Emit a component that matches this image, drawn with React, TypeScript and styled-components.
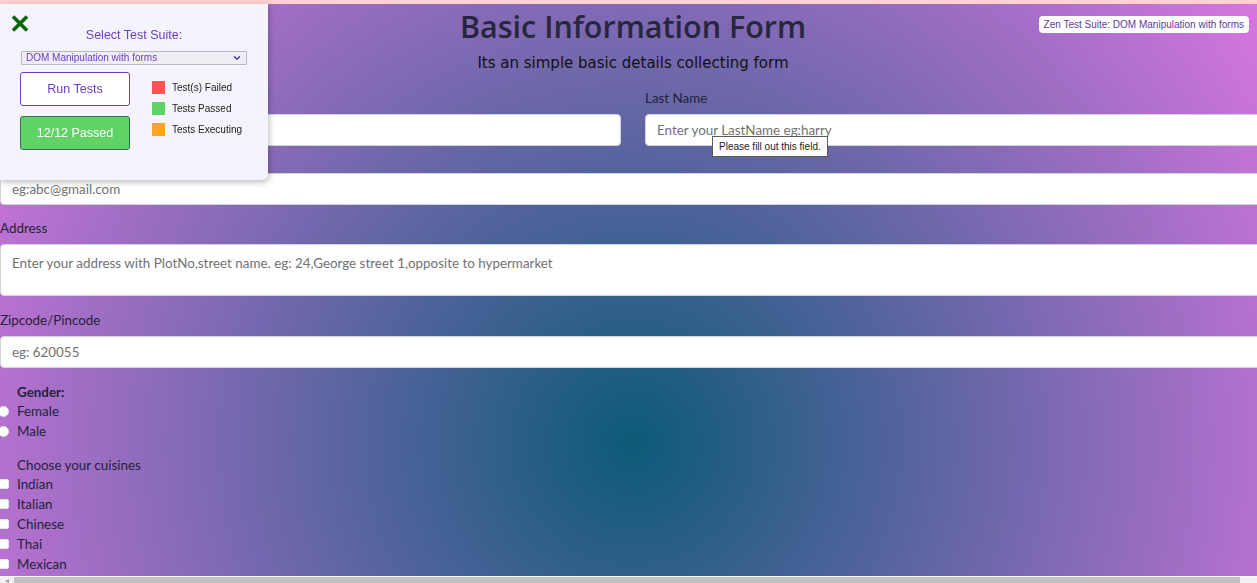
import React from 'react';
import styled, { createGlobalStyle } from 'styled-components';
import { ChevronDown } from 'lucide-react';

const GlobalStyle = createGlobalStyle`
	html, body {
		margin: 0;
		padding: 0;
		overflow: hidden;
	}

	body {
		font-family: Lato, "Liberation Sans", sans-serif;
	}

	* {
		box-sizing: border-box;
	}
`;

const Page = styled.div`
	position: relative;
	width: 1266px;
	height: 886px;
	background: radial-gradient(circle at 50% 50%, #0c5a78 0%, #da76e2 100%);
	color: #222;
`;

const TopStrip = styled.div`
	height: 4px;
	background: #ffd2d2;
`;

const Header = styled.header`
	width: 1266px;
	padding-top: 2px;
	text-align: center;
`;

const Title = styled.h1`
	margin: 0;
	font-family: "Open Sans", "Noto Sans", sans-serif;
	font-size: 30.5px;
	line-height: 40px;
	font-weight: 600;
	color: #28263e;
`;

const Subtitle = styled.p`
	margin: 6px 0 0;
	font-family: "Comic Sans MS", "DejaVu Sans", sans-serif;
	font-size: 15px;
	line-height: 22px;
	color: #111;
`;

const Form = styled.form`
	width: 1266px;
	margin-top: 14px;
`;

const Row = styled.div<{ $gap?: number }>`
	display: grid;
	grid-template-columns: 1fr 1fr;
	column-gap: 24px;
	margin-bottom: ${(p) => p.$gap ?? 13}px;
`;

const Field = styled.div<{ $gap?: number }>`
	position: relative;
	display: flex;
	flex-direction: column;
	margin-bottom: ${(p) => p.$gap ?? 0}px;
`;

const Label = styled.label`
	display: block;
	font-size: 13.4px;
	line-height: 20px;
	margin-bottom: 6px;
	color: #24223a;
`;

const Input = styled.input`
	width: 100%;
	height: 32px;
	padding: 0 11px;
	border: 1px solid #cfd3dc;
	border-radius: 4px;
	background: #fff;
	font-family: Lato, "Liberation Sans", sans-serif;
	font-size: 13.4px;
	outline: none;

	&::placeholder {
		color: #727272;
	}
`;

const TextArea = styled.textarea`
	width: 100%;
	height: 52px;
	padding: 8px 11px;
	border: 1px solid #cfd3dc;
	border-radius: 4px;
	background: #fff;
	font-family: Lato, "Liberation Sans", sans-serif;
	font-size: 13.4px;
	line-height: 20px;
	resize: none;
	outline: none;

	&::placeholder {
		color: #727272;
	}
`;

const Tooltip = styled.div`
	position: absolute;
	top: 48px;
	left: 67px;
	padding: 4px 6px;
	background: #fff;
	border: 1px solid #5a5a5a;
	font-family: "Liberation Sans", Arial, sans-serif;
	font-size: 10px;
	line-height: 11px;
	color: #222;
	white-space: nowrap;
`;

const Group = styled.fieldset<{ $top: number }>`
	margin: ${(p) => p.$top}px 0 0;
	padding: 0;
	border: none;
`;

const GroupTitle = styled.div<{ $bold?: boolean }>`
	padding-left: 17px;
	font-size: 13.4px;
	line-height: 18px;
	font-weight: ${(p) => (p.$bold ? 700 : 400)};
	color: #24223a;
`;

const Option = styled.label`
	display: flex;
	align-items: center;
	height: 20px;
	font-size: 13.4px;
	color: #24223a;
`;

const Radio = styled.input.attrs({ type: 'radio' })`
	appearance: none;
	width: 11px;
	height: 11px;
	margin: 0 8px 0 -2px;
	border: 1px solid #e4e4e4;
	border-radius: 50%;
	background: #fff;
`;

const Check = styled.input.attrs({ type: 'checkbox' })`
	appearance: none;
	width: 11px;
	height: 10px;
	margin: 0 8px 0 -2px;
	border: 1px solid #e4e4e4;
	border-radius: 2px;
	background: #fff;
`;

const Panel = styled.aside`
	position: fixed;
	top: 4px;
	left: 0;
	width: 268px;
	height: 176px;
	padding: 23px 20px 0;
	background: #f5f3fb;
	border-radius: 0 0 6px 0;
	box-shadow: 1px 2px 6px rgba(0, 0, 0, 0.28);
	font-family: "Liberation Sans", Arial, sans-serif;
	z-index: 10;
`;

const CloseButton = styled.button`
	position: absolute;
	top: 10px;
	left: 10px;
	width: 20px;
	height: 18px;
	padding: 0;
	border: none;
	background: none;
	display: flex;
	align-items: center;
	justify-content: center;
`;

const PanelTitle = styled.div`
	text-align: center;
	font-size: 12.5px;
	line-height: 16px;
	color: #6a3fc6;
`;

const SelectWrap = styled.div`
	position: relative;
	margin: 8px 0 0 1px;
	width: 226px;
`;

const Select = styled.select`
	appearance: none;
	display: block;
	width: 100%;
	height: 14px;
	padding: 0 0 0 4px;
	border: 1px solid #b8b8c4;
	border-radius: 1px;
	background: #efeef4;
	font-family: "Liberation Sans", Arial, sans-serif;
	font-size: 10px;
	line-height: 12px;
	color: #6a3fc6;
	outline: none;
`;

const SelectChevron = styled(ChevronDown)`
	position: absolute;
	top: 2px;
	right: 5px;
	pointer-events: none;
`;

const PanelBody = styled.div`
	display: flex;
	gap: 22px;
	margin-top: 7px;
`;

const Buttons = styled.div`
	display: flex;
	flex-direction: column;
	gap: 10px;
`;

const SuiteButton = styled.button<{ $passed?: boolean }>`
	width: 110px;
	height: 34px;
	padding-top: 1px;
	border-radius: 3px;
	border: 1px solid ${(p) => (p.$passed ? '#3c6a58' : '#6a3fc6')};
	background: ${(p) => (p.$passed ? '#5fd366' : '#fff')};
	color: ${(p) => (p.$passed ? '#fff' : '#6a3fc6')};
	font-family: "Liberation Sans", Arial, sans-serif;
	font-size: 12.5px;
`;

const Legend = styled.ul`
	list-style: none;
	margin: 0;
	padding: 8px 0 0;
	display: flex;
	flex-direction: column;
	gap: 7px;
`;

const LegendItem = styled.li`
	display: flex;
	align-items: center;
	gap: 7px;
	height: 14px;
	font-size: 10px;
	color: #222;
`;

const Swatch = styled.span<{ $color: string }>`
	width: 13px;
	height: 13px;
	background: ${(p) => p.$color};
`;

const SuiteBadge = styled.div`
	position: fixed;
	top: 16px;
	right: 8px;
	height: 17px;
	padding: 0 5px;
	display: flex;
	align-items: center;
	background: #fff;
	border-radius: 4px;
	font-family: "Liberation Sans", Arial, sans-serif;
	font-size: 10px;
	color: #5b3c9c;
	z-index: 10;
`;

const ScrollBar = styled.div`
	position: fixed;
	left: 0;
	right: 0;
	bottom: 0;
	height: 7px;
	display: flex;
	align-items: stretch;
	background: #f1f1f1;
	border-top: 1px solid #fafafa;
	z-index: 20;
`;

const ScrollArrow = styled.div`
	width: 14px;
	display: flex;
	justify-content: center;
	padding-top: 2px;
`;

const ScrollThumb = styled.div`
	width: 1226px;
	background: #c1c1c1;
`;

const legend = [
	{ color: '#ff5454', text: 'Test(s) Failed' },
	{ color: '#5fd366', text: 'Tests Passed' },
	{ color: '#ffa421', text: 'Tests Executing' },
];

const cuisines = ['Indian', 'Italian', 'Chinese', 'Thai', 'Mexican'];

export default function App(): JSX.Element {
	return (
		<>
			<GlobalStyle />
			<Page>
				<TopStrip />
				<Header>
					<Title>Basic Information Form</Title>
					<Subtitle>Its an simple basic details collecting form</Subtitle>
				</Header>
				<Form>
					<Row $gap={1}>
						<Field>
							<Label htmlFor="first-name">First Name</Label>
							<Input id="first-name" placeholder="Enter your FirstName eg:harry" />
						</Field>
						<Field>
							<Label htmlFor="last-name">Last Name</Label>
							<Input id="last-name" placeholder="Enter your LastName eg:harry" />
							<Tooltip>Please fill out this field.</Tooltip>
						</Field>
					</Row>
					<Field $gap={13}>
						<Label htmlFor="email">Email</Label>
						<Input id="email" placeholder="eg:abc@gmail.com" />
					</Field>
					<Field $gap={14}>
						<Label htmlFor="address">Address</Label>
						<TextArea
							id="address"
							placeholder="Enter your address with PlotNo,street name. eg: 24,George street 1,opposite to hypermarket"
						/>
					</Field>
					<Field>
						<Label htmlFor="pincode">Zipcode/Pincode</Label>
						<Input id="pincode" placeholder="eg: 620055" />
					</Field>
					<Group $top={15}>
						<GroupTitle $bold>Gender:</GroupTitle>
						<Option>
							<Radio name="gender" />
							Female
						</Option>
						<Option>
							<Radio name="gender" />
							Male
						</Option>
					</Group>
					<Group $top={15}>
						<GroupTitle>Choose your cuisines</GroupTitle>
						{cuisines.map((c) => (
							<Option key={c}>
								<Check />
								{c}
							</Option>
						))}
					</Group>
				</Form>
			</Page>

			<Panel>
				<CloseButton aria-label="close">
					<svg width="18" height="17" viewBox="0 0 18 17">
						<path d="M2 1.5 L16 15.5 M16 1.5 L2 15.5" stroke="#0b650b" strokeWidth="3.6" />
					</svg>
				</CloseButton>
				<PanelTitle>Select Test Suite:</PanelTitle>
				<SelectWrap>
					<Select defaultValue="dom">
						<option value="dom">DOM Manipulation with forms</option>
					</Select>
					<SelectChevron size={10} strokeWidth={3} color="#4a2f8a" />
				</SelectWrap>
				<PanelBody>
					<Buttons>
						<SuiteButton>Run Tests</SuiteButton>
						<SuiteButton $passed>12/12 Passed</SuiteButton>
					</Buttons>
					<Legend>
						{legend.map((l) => (
							<LegendItem key={l.text}>
								<Swatch $color={l.color} />
								{l.text}
							</LegendItem>
						))}
					</Legend>
				</PanelBody>
			</Panel>

			<SuiteBadge>Zen Test Suite: DOM Manipulation with forms</SuiteBadge>

			<ScrollBar>
				<ScrollArrow>
					<svg width="4" height="4" viewBox="0 0 4 4">
						<path d="M0 2 L4 0 L4 4 Z" fill="#a3a3a3" />
					</svg>
				</ScrollArrow>
				<ScrollThumb />
			</ScrollBar>
		</>
	);
}
